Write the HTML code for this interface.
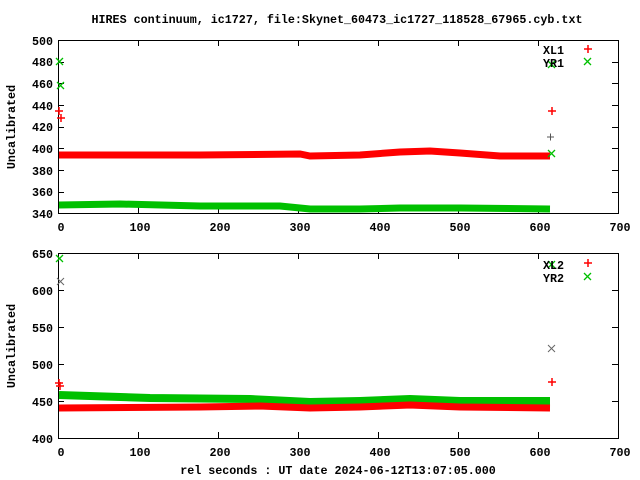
<!DOCTYPE html>
<html><head><style>
body{margin:0;background:#fff;}
svg{display:block;}
text{font-family:"Liberation Mono",monospace;font-weight:bold;font-size:11.7px;fill:#000;}
</style></head><body>
<svg width="640" height="480" viewBox="0 0 640 480" xmlns="http://www.w3.org/2000/svg">
<text x="337" y="23" text-anchor="middle">HIRES continuum, ic1727, file:Skynet_60473_ic1727_118528_67965.cyb.txt</text>
<text x="338" y="474" text-anchor="middle">rel seconds : UT date 2024-06-12T13:07:05.000</text>
<text transform="translate(15,127) rotate(-90)" text-anchor="middle">Uncalibrated</text>
<text transform="translate(15,346) rotate(-90)" text-anchor="middle">Uncalibrated</text>

<!-- Plot 1 -->
<g stroke="#000" stroke-width="1" fill="none">
<rect x="58.5" y="40.5" width="560" height="173"/>
<path d="M58 62.5h6M58 83.5h6M58 105.5h6M58 127.5h6M58 148.5h6M58 170.5h6M58 192.5h6
M618 62.5h-6M618 83.5h-6M618 105.5h-6M618 127.5h-6M618 148.5h-6M618 170.5h-6M618 192.5h-6
M138.5 213v-6M218.5 213v-6M298.5 213v-6M378.5 213v-6M458.5 213v-6M538.5 213v-6
M138.5 40v6M218.5 40v6M298.5 40v6M378.5 40v6M458.5 40v6M538.5 40v6"/>
</g>
<g text-anchor="end">
<text x="53" y="45">500</text><text x="53" y="66">480</text><text x="53" y="88">460</text><text x="53" y="110">440</text><text x="53" y="131">420</text><text x="53" y="153">400</text><text x="53" y="175">380</text><text x="53" y="196">360</text><text x="53" y="218">340</text>
</g>
<g text-anchor="middle">
<text x="61" y="231">0</text><text x="140" y="231">100</text><text x="220" y="231">200</text><text x="300" y="231">300</text><text x="380" y="231">400</text><text x="460" y="231">500</text><text x="540" y="231">600</text><text x="620" y="231">700</text>
</g>
<path d="M59 155 L200 155 L300 154 L310 156 L360 155 L400 152 L430 151 L460 153 L500 156 L550 156" stroke="#f00" stroke-width="7" fill="none"/>
<path d="M59 205 L120 204 L200 206 L280 206 L310 209 L360 209 L400 208 L460 208 L550 209" stroke="#00c000" stroke-width="7" fill="none"/>
<g stroke="#00c000" stroke-width="1.3">
<path d="M56 58l7 7M63 58l-7 7M57 82l7 7M64 82l-7 7M548 61l7 7M555 61l-7 7M548 150l7 7M555 150l-7 7M584 58l7 7M591 58l-7 7"/>
</g>
<g stroke="#f00" stroke-width="1.5">
<path d="M55 111h8M59 107v8M57 118h8M61 114v8M548 111h8M552 107v8M584 49h8M588 45v8"/>
</g>
<path d="M547 137h7M550.5 133.5v7" stroke="#555" stroke-width="1"/>
<text x="543" y="54">XL1</text><text x="543" y="67">YR1</text>

<!-- Plot 2 -->
<g stroke="#000" stroke-width="1" fill="none">
<rect x="58.5" y="253.5" width="560" height="185"/>
<path d="M58 290.5h6M58 327.5h6M58 364.5h6M58 401.5h6M618 290.5h-6M618 327.5h-6M618 364.5h-6M618 401.5h-6
M138.5 438v-6M218.5 438v-6M298.5 438v-6M378.5 438v-6M458.5 438v-6M538.5 438v-6
M138.5 253v6M218.5 253v6M298.5 253v6M378.5 253v6M458.5 253v6M538.5 253v6"/>
</g>
<g text-anchor="end">
<text x="53" y="258">650</text><text x="53" y="295">600</text><text x="53" y="332">550</text><text x="53" y="369">500</text><text x="53" y="406">450</text><text x="53" y="443">400</text>
</g>
<g text-anchor="middle">
<text x="61" y="456">0</text><text x="140" y="456">100</text><text x="220" y="456">200</text><text x="300" y="456">300</text><text x="380" y="456">400</text><text x="460" y="456">500</text><text x="540" y="456">600</text><text x="620" y="456">700</text>
</g>
<path d="M59 395 L150 398 L250 399 L310 402 L360 401 L410 399 L460 401 L550 401" stroke="#00c000" stroke-width="8" fill="none"/>
<path d="M59 408 L200 407 L260 406 L310 408 L360 407 L410 405 L460 407 L550 408" stroke="#f00" stroke-width="7" fill="none"/>
<g stroke="#00c000" stroke-width="1.3">
<path d="M56 255l7 7M63 255l-7 7M548 261l7 7M555 261l-7 7M584 273l7 7M591 273l-7 7"/>
</g>
<path d="M57 278l7 7M64 278l-7 7M548 345l7 7M555 345l-7 7" stroke="#666" stroke-width="1"/>
<g stroke="#f00" stroke-width="1.5">
<path d="M55 383h8M59 379v8M56 386h8M60 382v8M548 382h8M552 378v8M584 263h8M588 259v8"/>
</g>
<text x="543" y="269">XL2</text><text x="543" y="282">YR2</text>
</svg>
</body></html>
